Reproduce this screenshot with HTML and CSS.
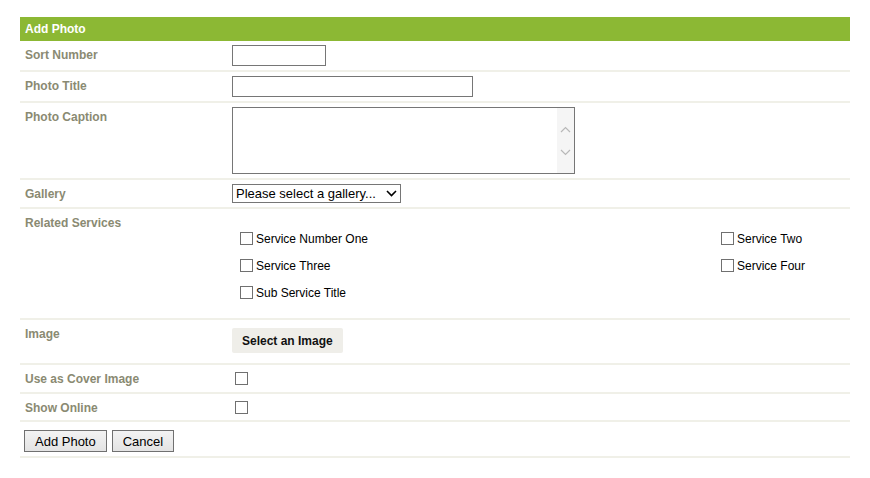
FILE: index.html
```html
<!DOCTYPE html>
<html>
<head>
<meta charset="utf-8">
<link rel="stylesheet" href="styles.css">
</head>
<body>
<div class="page">
  <form class="panel">
    <div class="panel-head">Add Photo</div>

    <div class="row">
      <div class="label">Sort Number</div>
      <div class="value"><input class="text short" type="text"></div>
    </div>

    <div class="row">
      <div class="label">Photo Title</div>
      <div class="value"><input class="text long" type="text"></div>
    </div>

    <div class="row">
      <div class="label">Photo Caption</div>
      <div class="value">
        <div class="area">
          <textarea class="area-text"></textarea>
          <div class="area-bar">
            <svg width="11" height="7" viewBox="0 0 11 7"><path d="M1 6 L5.5 1.5 L10 6" fill="none" stroke="#b8b8b8" stroke-width="1.2"/></svg>
            <svg width="11" height="7" viewBox="0 0 11 7"><path d="M1 1 L5.5 5.5 L10 1" fill="none" stroke="#b8b8b8" stroke-width="1.2"/></svg>
          </div>
        </div>
      </div>
    </div>

    <div class="row">
      <div class="label">Gallery</div>
      <div class="value">
        <div class="select-wrap">
          <select class="select">
            <option>Please select a gallery...</option>
          </select>
          <svg class="select-arrow" width="11" height="7" viewBox="0 0 11 7"><path d="M1 1 L5.5 5.5 L10 1" fill="none" stroke="#000" stroke-width="1.6"/></svg>
        </div>
      </div>
    </div>

    <div class="row">
      <div class="label">Related Services</div>
      <div class="value">
        <div class="services">
          <label class="svc"><input type="checkbox" class="cb">Service Number One</label>
          <label class="svc"><input type="checkbox" class="cb">Service Two</label>
          <label class="svc"><input type="checkbox" class="cb">Service Three</label>
          <label class="svc"><input type="checkbox" class="cb">Service Four</label>
          <label class="svc"><input type="checkbox" class="cb">Sub Service Title</label>
        </div>
      </div>
    </div>

    <div class="row">
      <div class="label">Image</div>
      <div class="value"><button type="button" class="pick">Select an Image</button></div>
    </div>

    <div class="row">
      <div class="label">Use as Cover Image</div>
      <div class="value"><input type="checkbox" class="cb solo"></div>
    </div>

    <div class="row">
      <div class="label">Show Online</div>
      <div class="value"><input type="checkbox" class="cb solo last"></div>
    </div>

    <div class="actions">
      <button type="button" class="btn">Add Photo</button>
      <button type="button" class="btn">Cancel</button>
    </div>
  </form>
</div>
</body>
</html>
```

FILE: styles.css
```css
* { box-sizing: border-box; }

body {
  margin: 0;
  background: #ffffff;
  font-family: "Liberation Sans", Arial, sans-serif;
  font-size: 12px;
  color: #000;
}

.page {
  padding: 17px 20px 0 20px;
}

.panel {
  display: flex;
  flex-direction: column;
  margin: 0;
}

.panel-head {
  background: #8cb834;
  color: #ffffff;
  font-weight: bold;
  font-size: 12px;
  height: 24px;
  line-height: 24px;
  padding: 0 5px;
}

.row {
  display: grid;
  grid-template-columns: 212px 1fr;
  border-bottom: 2px solid #f0f0e8;
}

.label {
  padding: 7px 5px 3px 5px;
  font-weight: bold;
  font-size: 12px;
  line-height: 14px;
  color: #8a8a72;
}

.value {
  padding: 4px 0;
  display: flex;
  flex-direction: column;
  align-items: flex-start;
}

.text {
  display: block;
  height: 21px;
  border: 1px solid #767676;
  padding: 1px 3px;
  font: 13px "Liberation Sans", Arial, sans-serif;
  margin: 0;
  background: #fff;
}
.text.short { width: 94px; }
.text.long { width: 241px; }

.area {
  display: flex;
  width: 343px;
  height: 67px;
  border: 1px solid #767676;
  background: #fff;
}
.area-text {
  flex: 1;
  border: none;
  resize: none;
  outline: none;
  padding: 2px 3px;
  font: 13px "Liberation Sans", Arial, sans-serif;
  overflow: hidden;
}
.area-bar {
  width: 17px;
  background: #f5f5f5;
  display: flex;
  flex-direction: column;
  align-items: center;
  justify-content: center;
  gap: 16px;
}
.area-bar svg { display: block; }

.select-wrap {
  position: relative;
  width: 169px;
  height: 19px;
}
.select {
  appearance: none;
  -webkit-appearance: none;
  display: block;
  width: 169px;
  height: 19px;
  border: 1px solid #767676;
  border-radius: 0;
  background: #fff;
  padding: 0 18px 0 3px;
  margin: 0;
  font: 13px "Liberation Sans", Arial, sans-serif;
  color: #000;
}
.select-arrow {
  position: absolute;
  right: 4px;
  top: 6px;
  pointer-events: none;
}

.services {
  display: grid;
  grid-template-columns: 481px auto;
  grid-auto-rows: 27px;
  padding: 12px 0 8px 4px;
}
.svc {
  display: flex;
  align-items: center;
  font-size: 12px;
  color: #000;
  white-space: nowrap;
}

.cb {
  appearance: none;
  -webkit-appearance: none;
  width: 13px;
  height: 13px;
  margin: 0 3px 0 4px;
  border: 1px solid #707070;
  border-radius: 0;
  background: #fff;
  display: block;
  flex: none;
}
.cb.solo {
  margin: 3px 0 3px 3px;
}
.cb.solo.last {
  margin: 3px 0 2px 3px;
}

.pick {
  margin: 4px 0 6px 0;
  height: 25px;
  padding: 0 10px;
  border: none;
  border-radius: 2px;
  background: #efeee9;
  font: bold 12px "Liberation Sans", Arial, sans-serif;
  color: #111;
}

.actions {
  display: flex;
  gap: 5px;
  padding: 8px 4px 4px 4px;
  border-bottom: 2px solid #f0f0e8;
}

.btn {
  height: 22px;
  padding: 0 10px;
  border: 1px solid #707070;
  border-radius: 0;
  background: linear-gradient(#f3f3f3, #e3e3e3);
  font: 13px "Liberation Sans", Arial, sans-serif;
  color: #000;
}
```
